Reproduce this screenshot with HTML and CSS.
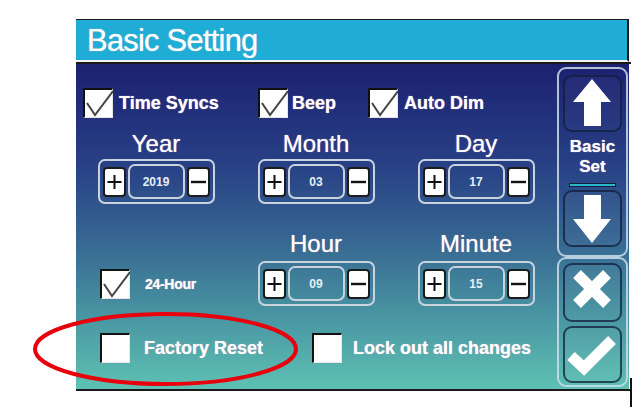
FILE: index.html
```html
<!DOCTYPE html>
<html>
<head>
<meta charset="utf-8">
<link rel="stylesheet" href="styles.css">
</head>
<body>
<div class="device">
  <div class="header">Basic Setting</div>
  <div class="divider"></div>
  <div class="main">
    <div class="content">
      <div class="row1">
        <div class="opt">
          <span class="box"><svg width="28" height="28" viewBox="0 0 28 28"><polyline points="2,13 10,25 28,1" fill="none" stroke="#444" stroke-width="2"/></svg></span>
          <span class="opt-text">Time Syncs</span>
        </div>
        <div class="opt">
          <span class="box"><svg width="28" height="28" viewBox="0 0 28 28"><polyline points="2,13 10,25 28,1" fill="none" stroke="#444" stroke-width="2"/></svg></span>
          <span class="opt-text tight">Beep</span>
        </div>
        <div class="opt">
          <span class="box"><svg width="28" height="28" viewBox="0 0 28 28"><polyline points="2,13 10,25 28,1" fill="none" stroke="#444" stroke-width="2"/></svg></span>
          <span class="opt-text">Auto Dim</span>
        </div>
      </div>

      <div class="fields">
        <div class="field-label">Year</div>
        <div class="field-label">Month</div>
        <div class="field-label">Day</div>
        <div class="spinner">
          <span class="pm"><svg width="19" height="26" viewBox="0 0 19 26"><path d="M2.5 13H16.5M9.5 6V20" stroke="#111" stroke-width="2"/></svg></span>
          <span class="value">2019</span>
          <span class="pm"><svg width="19" height="26" viewBox="0 0 19 26"><path d="M2 13H17" stroke="#111" stroke-width="2.4"/></svg></span>
        </div>
        <div class="spinner">
          <span class="pm"><svg width="19" height="26" viewBox="0 0 19 26"><path d="M2.5 13H16.5M9.5 6V20" stroke="#111" stroke-width="2"/></svg></span>
          <span class="value">03</span>
          <span class="pm"><svg width="19" height="26" viewBox="0 0 19 26"><path d="M2 13H17" stroke="#111" stroke-width="2.4"/></svg></span>
        </div>
        <div class="spinner">
          <span class="pm"><svg width="19" height="26" viewBox="0 0 19 26"><path d="M2.5 13H16.5M9.5 6V20" stroke="#111" stroke-width="2"/></svg></span>
          <span class="value">17</span>
          <span class="pm"><svg width="19" height="26" viewBox="0 0 19 26"><path d="M2 13H17" stroke="#111" stroke-width="2.4"/></svg></span>
        </div>
      </div>

      <div class="fields fields-time">
        <div></div>
        <div class="field-label">Hour</div>
        <div class="field-label">Minute</div>
        <div class="opt hour24">
          <span class="box"><svg width="28" height="28" viewBox="0 0 28 28"><polyline points="2,13 10,25 28,1" fill="none" stroke="#444" stroke-width="2"/></svg></span>
          <span class="opt-text small">24-Hour</span>
        </div>
        <div class="spinner">
          <span class="pm"><svg width="19" height="26" viewBox="0 0 19 26"><path d="M2.5 13H16.5M9.5 6V20" stroke="#111" stroke-width="2"/></svg></span>
          <span class="value">09</span>
          <span class="pm"><svg width="19" height="26" viewBox="0 0 19 26"><path d="M2 13H17" stroke="#111" stroke-width="2.4"/></svg></span>
        </div>
        <div class="spinner">
          <span class="pm"><svg width="19" height="26" viewBox="0 0 19 26"><path d="M2.5 13H16.5M9.5 6V20" stroke="#111" stroke-width="2"/></svg></span>
          <span class="value">15</span>
          <span class="pm"><svg width="19" height="26" viewBox="0 0 19 26"><path d="M2 13H17" stroke="#111" stroke-width="2.4"/></svg></span>
        </div>
      </div>

      <div class="row4">
        <div class="opt">
          <span class="box"></span>
          <span class="opt-text wide">Factory Reset</span>
        </div>
        <div class="opt">
          <span class="box"></span>
          <span class="opt-text mid">Lock out all changes</span>
        </div>
      </div>
    </div>

    <div class="sidebar">
      <div class="panel panel-nav">
        <div class="btn">
          <svg width="54" height="53" viewBox="0 0 54 53"><polygon points="27,2 46,25 36,25 36,49 19,49 19,25 8,25" fill="#fff"/></svg>
        </div>
        <div class="nav-label">Basic<br>Set</div>
        <div class="nav-bar"></div>
        <div class="btn">
          <svg width="54" height="53" viewBox="0 0 54 53"><polygon points="8,27 19,27 19,3 36,3 36,27 46,27 27,51" fill="#fff"/></svg>
        </div>
      </div>
      <div class="panel panel-act">
        <div class="btn">
          <svg width="54" height="53" viewBox="0 0 54 53"><path d="M12 9L42 39M42 9L12 39" stroke="#fff" stroke-width="11"/></svg>
        </div>
        <div class="btn">
          <svg width="54" height="53" viewBox="0 0 54 53"><polyline points="6,28 19,40 47,12" fill="none" stroke="#fff" stroke-width="11"/></svg>
        </div>
      </div>
    </div>
  </div>
  <div class="bottom-line"></div>
  <svg class="highlight" width="270" height="78" viewBox="0 0 270 78"><ellipse cx="134.5" cy="39" rx="130.5" ry="35" fill="none" stroke="#e8000c" stroke-width="4"/></svg>
</div>
</body>
</html>
```

FILE: styles.css
```css
* { box-sizing: border-box; }
html, body { margin: 0; padding: 0; background: #fff; }
body { font-family: "Liberation Sans", Arial, sans-serif; width: 635px; height: 417px; overflow: hidden; }

.device {
  position: relative;
  margin: 19px 0 0 76px;
  width: 553px;
}

.device::after {
  content: "";
  position: absolute;
  left: 554px;
  top: 359px;
  width: 2px;
  height: 29px;
  background: #111;
}

.header {
  height: 43px;
  background: #1fadd6;
  border-top: 1px solid #1a1a1a;
  border-right: 2px solid #1a1a1a;
  border-bottom: 2px solid #f2f2f2;
  color: #fff;
  font-size: 31px;
  letter-spacing: -0.8px;
  line-height: 38px;
  padding: 2px 0 0 11px;
  text-shadow: 0 0 1px rgba(255, 210, 230, 0.9);
}

.divider {
  height: 2px;
  background: #1a1a1a;
  width: 555px;
}

.main {
  display: flex;
  height: 325px;
  background: linear-gradient(180deg, #1c2170 0%, #273f85 30%, #376892 55%, #4690a0 75%, #5ec1b3 100%);
}

.content {
  flex: 1;
  padding-top: 24px;
}

.row1 {
  display: grid;
  grid-template-columns: 175px 110px auto;
  padding-left: 7px;
}

.opt {
  display: flex;
  align-items: center;
  gap: 6px;
}

.box {
  width: 30px;
  height: 30px;
  background: #fff;
  border-top: 2px solid #111;
  border-left: 2px solid #111;
  border-right: 1px solid #e6e6e6;
  border-bottom: 1px solid #e6e6e6;
  flex: none;
  display: block;
}

.box svg { display: block; }

.opt-text {
  color: #fff;
  font-weight: bold;
  font-size: 18px;
  text-shadow: 0 0 1px rgba(255, 200, 225, 0.9);
}

.opt-text.tight { margin-left: -2px; }
.opt-text.small { font-size: 14px; margin-left: 9px; letter-spacing: -0.3px; }
.opt-text.wide { margin-left: 8px; }
.opt-text.mid { margin-left: 5px; }

.fields {
  display: grid;
  grid-template-columns: repeat(3, 160px);
  grid-template-rows: 28px 45px;
  row-gap: 1px;
  justify-items: center;
  align-items: center;
  margin-top: 12px;
}

.fields-time {
  margin-top: 26px;
  row-gap: 3px;
}

.field-label {
  color: #fff;
  font-size: 24px;
  line-height: 28px;
  text-shadow: 0 0 1px rgba(255, 200, 225, 0.9);
}

.hour24 {
  justify-self: start;
  padding-left: 24px;
}

.spinner {
  width: 117px;
  height: 45px;
  border: 2px solid #c8d3de;
  border-radius: 7px;
  padding: 3px;
  display: flex;
  align-items: center;
  gap: 2px;
}

.pm {
  width: 23px;
  height: 30px;
  background: #fff;
  border: 2px solid #1c1c1c;
  border-radius: 4px;
  flex: none;
}

.pm svg { display: block; }

.value {
  flex: 1;
  height: 35px;
  border: 2px solid #c8d3de;
  border-radius: 7px;
  color: #e6eef8;
  font-size: 12px;
  font-weight: bold;
  display: flex;
  align-items: center;
  justify-content: center;
}

.row4 {
  display: grid;
  grid-template-columns: 212px auto;
  padding-left: 24px;
  margin-top: 27px;
}

.sidebar {
  width: 72px;
  flex: none;
  padding-top: 3px;
}

.panel {
  width: 71px;
  border: 2px solid rgba(205, 222, 236, 0.85);
  border-radius: 9px;
  display: flex;
  flex-direction: column;
  align-items: center;
}

.panel-nav {
  height: 190px;
  padding: 6px 4px 8px;
}

.panel-act {
  height: 130px;
  padding: 4px 4px 3px;
  gap: 4px;
}

.btn {
  width: 59px;
  height: 57px;
  border: 2px solid rgba(18, 28, 55, 0.75);
  border-radius: 9px;
  background: rgba(255, 255, 255, 0.03);
  flex: none;
}

.panel-act .btn:first-child { height: 59px; }

.btn svg { display: block; }

.nav-label {
  margin-top: 5px;
  color: #fff;
  font-weight: bold;
  font-size: 17px;
  line-height: 20px;
  text-align: center;
  text-shadow: 0 0 1px rgba(255, 200, 225, 0.9);
}

.nav-bar {
  width: 47px;
  height: 5px;
  margin: 6px 0 3px;
  background: #2ab7c9;
  border: 1px solid #14203e;
}

.bottom-line {
  width: 555px;
  height: 2px;
  background: #1a1a1a;
}

.highlight {
  position: absolute;
  left: -45px;
  top: 291px;
}
```
